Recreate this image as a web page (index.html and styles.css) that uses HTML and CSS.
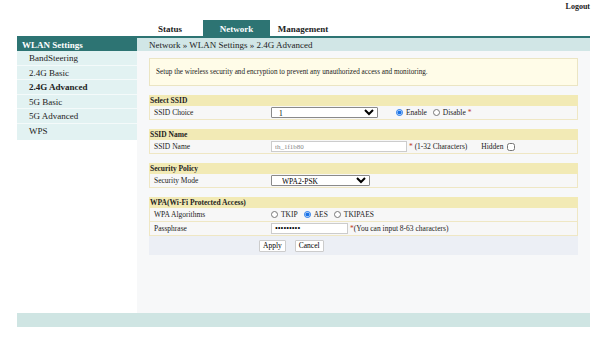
FILE: index.html
```html
<!DOCTYPE html>
<html lang="en">
<head>
    <meta charset="UTF-8">
    <title>WLAN Settings</title>
    <link rel="stylesheet" href="styles.css">
</head>
<body>
    <div class="top">
        <a class="logout" href="#">Logout</a>
    </div>

    <div class="wrap">
        <div class="tabs">
            <div class="tab">Status</div>
            <div class="tab active">Network</div>
            <div class="tab">Management</div>
        </div>

        <div class="layout">
            <!-- Left menu -->
            <div class="side">
                <div class="side-head">WLAN Settings</div>
                <div class="side-item">BandSteering</div>
                <div class="side-item">2.4G Basic</div>
                <div class="side-item current">2.4G Advanced</div>
                <div class="side-item">5G Basic</div>
                <div class="side-item">5G Advanced</div>
                <div class="side-item">WPS</div>
            </div>

            <!-- Main panel -->
            <div class="main">
                <div class="crumb">Network &raquo; WLAN Settings &raquo; 2.4G Advanced</div>
                <div class="content">
                    <div class="notice">Setup the wireless security and encryption to prevent any unauthorized access and monitoring.</div>

                    <div class="section">
                        <div class="sec-head">Select SSID</div>
                        <div class="row">
                            <div class="label">SSID Choice</div>
                            <div class="value">
                                <select class="sel"><option>1</option></select>
                                <label class="opt first"><input type="radio" name="en" checked> Enable</label>
                                <label class="opt"><input type="radio" name="en"> Disable&nbsp;<span class="req">*</span></label>
                            </div>
                        </div>
                    </div>

                    <div class="section">
                        <div class="sec-head">SSID Name</div>
                        <div class="row">
                            <div class="label">SSID Name</div>
                            <div class="value">
                                <input class="txt ssid" type="text" value="th_1f1b80">
                                <span class="req">*</span>&nbsp;(1-32 Characters)
                                <label class="hidden">Hidden <input type="checkbox"></label>
                            </div>
                        </div>
                    </div>

                    <div class="section">
                        <div class="sec-head">Security Policy</div>
                        <div class="row">
                            <div class="label">Security Mode</div>
                            <div class="value">
                                <select class="sel mode"><option>WPA2-PSK</option></select>
                            </div>
                        </div>
                    </div>

                    <div class="section">
                        <div class="sec-head">WPA(Wi-Fi Protected Access)</div>
                        <div class="row">
                            <div class="label">WPA Algorithms</div>
                            <div class="value">
                                <label class="opt"><input type="radio" name="alg"> TKIP</label>
                                <label class="opt"><input type="radio" name="alg" checked> AES</label>
                                <label class="opt"><input type="radio" name="alg"> TKIPAES</label>
                            </div>
                        </div>
                        <div class="row">
                            <div class="label">Passphrase</div>
                            <div class="value">
                                <input class="txt pass" type="password" value="12345678a">
                                <span class="req">*</span>(You can input 8-63 characters)
                            </div>
                        </div>
                        <div class="buttons">
                            <button>Apply</button>
                            <button>Cancel</button>
                        </div>
                    </div>
                </div>
            </div>
        </div>

        <div class="footer"></div>
    </div>
</body>
</html>
```

FILE: styles.css
```css
body {
    font-family: "Liberation Serif", "Times New Roman", serif;
    margin: 0;
    padding: 0;
    background-color: #ffffff;
    color: #222;
}

.top {
    height: 20px;
    display: flex;
    justify-content: flex-end;
    align-items: center;
    padding-right: 10px;
}

.logout {
    font-size: 8px;
    font-weight: bold;
    color: #222;
    text-decoration: none;
    margin-top: -7px;
}

.wrap {
    margin: 0 10px 0 17px;
}

.tabs {
    display: flex;
    margin-left: 120px;
    height: 16px;
}

.tab {
    width: 66px;
    display: flex;
    align-items: center;
    justify-content: center;
    font-size: 9px;
    font-weight: bold;
    padding-top: 1px;
}

.tab.active {
    background-color: #2d7473;
    color: white;
    width: 67px;
}

.layout {
    display: grid;
    grid-template-columns: 120px 1fr;
    border-top: 2px solid #2d7473;
}

.side {
    align-self: start;
    background-color: #e2f2f2;
    padding-bottom: 2px;
}

.side-head {
    background-color: #2d7473;
    color: white;
    font-size: 9px;
    font-weight: bold;
    height: 13px;
    line-height: 14px;
    padding-left: 5px;
}

.side-item {
    font-size: 9px;
    height: 14.5px;
    line-height: 14px;
    padding-left: 12px;
    border-bottom: 1px solid #f4fafa;
    box-sizing: border-box;
}

.side-item:last-child {
    border-bottom: none;
}

.side-item.current {
    font-weight: bold;
}

.main {
    background-color: #f7f8f9;
    height: 275px;
}

.crumb {
    background-color: #d1e6e6;
    height: 13px;
    line-height: 14px;
    font-size: 9px;
    padding-left: 12px;
}

.content {
    padding: 7px 12px 0 12px;
}

.notice {
    background-color: #fffce8;
    border: 1px solid #ebe5c3;
    height: 26px;
    line-height: 26px;
    font-size: 7.2px;
    padding-left: 6px;
    margin-bottom: 9px;
}

.section {
    margin-bottom: 9px;
}

.sec-head {
    background-color: #f2eab5;
    height: 11px;
    line-height: 12px;
    font-size: 7.5px;
    font-weight: bold;
    padding-left: 1px;
}

.row {
    display: flex;
    height: 13px;
    align-items: center;
    background-color: #f7f7f7;
    border: 1px solid #efe7c4;
    border-top: none;
    font-size: 7.5px;
}

.label {
    width: 117px;
    padding-left: 4px;
    box-sizing: border-box;
}

.value {
    display: flex;
    align-items: center;
    padding-left: 4px;
}

.sel {
    width: 107px;
    height: 11px;
    font-family: inherit;
    font-size: 7.5px;
    padding: 0 0 0 3px;
    border: 1px solid #8a8a8a;
    border-radius: 1px;
    background-color: white;
}

.sel.mode {
    width: 99px;
    padding-left: 6px;
}

.opt {
    display: flex;
    align-items: center;
    margin-right: 6px;
}

.opt.first {
    margin-left: 18px;
}

input[type="radio"] {
    width: 7px;
    height: 7px;
    margin: 0 3px 0 0;
    accent-color: #1a73e8;
}

.txt {
    height: 11px;
    box-sizing: border-box;
    border: 1px solid #ccc;
    background-color: white;
    font-family: inherit;
    font-size: 7px;
    padding: 0 3px;
    margin-right: 2px;
}

.ssid {
    width: 136px;
    color: #888;
}

.pass {
    width: 77px;
    font-size: 8px;
}

.req {
    color: #c0392b;
}

.hidden {
    display: flex;
    align-items: center;
    margin-left: 14px;
}

input[type="checkbox"] {
    width: 8px;
    height: 8px;
    margin: 0 0 0 4px;
}

.buttons {
    background-color: #eceff5;
    height: 19px;
    display: flex;
    align-items: center;
    gap: 9px;
    padding-left: 110px;
}

button {
    font-family: inherit;
    font-size: 7.5px;
    height: 12px;
    padding: 0 3px;
    background-color: white;
    border: 1px solid #ccc;
    border-radius: 1px;
}

.footer {
    background-color: #cfe5e3;
    height: 14px;
}
```
